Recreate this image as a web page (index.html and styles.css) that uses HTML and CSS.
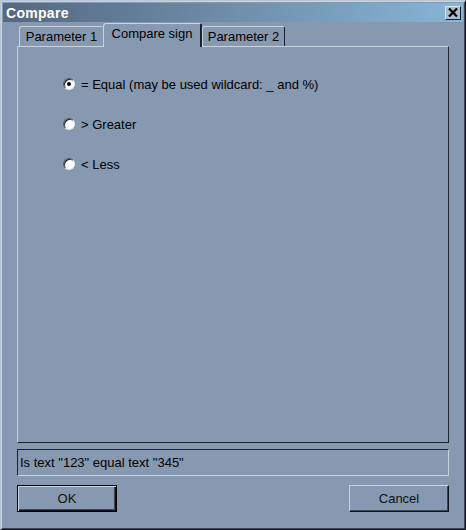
FILE: index.html
```html
<!DOCTYPE html>
<html>
<head>
<meta charset="utf-8">
<link rel="stylesheet" href="styles.css">
</head>
<body>
<div class="window">
  <div class="titlebar">
    <span class="title">Compare</span>
    <span class="close">
      <svg width="10" height="9" viewBox="0 0 10 9"><path d="M1 0.5 L9 8.5 M9 0.5 L1 8.5" stroke="#000" stroke-width="2.2"/></svg>
    </span>
  </div>
  <div class="content">
    <div class="tabs">
      <div class="tab first">Parameter 1</div>
      <div class="tab selected">Compare sign</div>
      <div class="tab last">Parameter 2</div>
    </div>
    <div class="panel">
      <div class="radios">
        <label class="radio-row"><span class="radio checked"></span><span>= Equal (may be used wildcard: _ and %)</span></label>
        <label class="radio-row"><span class="radio"></span><span>&gt; Greater</span></label>
        <label class="radio-row"><span class="radio"></span><span>&lt; Less</span></label>
      </div>
    </div>
    <div class="status">Is text "123" equal text "345"</div>
    <div class="buttons">
      <div class="btn default"><span>OK</span></div>
      <div class="btn">Cancel</div>
    </div>
  </div>
</div>
</body>
</html>
```

FILE: styles.css
```css
html, body {
  margin: 0;
  padding: 0;
  background: #8799b1;
}
body {
  font-family: "Liberation Sans", Arial, sans-serif;
  font-size: 13px;
  color: #000;
}
.window {
  width: 466px;
  height: 530px;
  box-sizing: border-box;
  background: #8799b1;
  border-top: 1px solid #b8c6d6;
  border-left: 1px solid #b8c6d6;
  border-right: 1px solid #10161e;
  border-bottom: 1px solid #10161e;
  box-shadow: inset 1px 1px 0 #c8d4e0, inset -1px -1px 0 #3a4656;
  padding: 2px;
  display: flex;
  flex-direction: column;
}
.titlebar {
  height: 19px;
  background: linear-gradient(to right, #546880, #6c8aa6 45%, #86b6d6);
  display: flex;
  align-items: center;
  justify-content: space-between;
  padding: 0 2px 0 3px;
  flex: none;
}
.title {
  color: #fff;
  font-weight: bold;
  font-size: 14px;
  letter-spacing: 0.3px;
}
.close {
  width: 14px;
  height: 12px;
  background: #a9bccb;
  border-top: 1px solid #d8e2ea;
  border-left: 1px solid #d8e2ea;
  border-right: 1px solid #1a222c;
  border-bottom: 1px solid #1a222c;
  display: flex;
  align-items: center;
  justify-content: center;
}
.close svg { display: block; }
.content {
  flex: 1;
  display: flex;
  flex-direction: column;
  padding: 1px 14px 0 14px;
}
.tabs {
  display: flex;
  align-items: flex-end;
  height: 23px;
  padding-left: 2px;
  position: relative;
  z-index: 1;
}
.tab {
  height: 20px;
  box-sizing: border-box;
  padding-top: 2px;
  border-top: 1px solid #c8d4e0;
  border-left: 1px solid #c8d4e0;
  border-right: 1px solid #1a222c;
  border-top-left-radius: 3px;
  border-top-right-radius: 2px;
  line-height: 16px;
  background: #8799b1;
  white-space: nowrap;
  text-align: center;
}
.tab.first {
  border-right: none;
  width: 84px;
}
.tab.last {
  width: 83px;
}
.tab.selected {
  width: 99px;
  height: 24px;
  margin-bottom: -1px;
  padding-top: 1px;
  line-height: 18px;
  position: relative;
  z-index: 2;
  border-right: 2px solid #1a222c;
}
.panel {
  height: 397px;
  box-sizing: border-box;
  border-top: 1px solid #c8d4e0;
  border-left: 1px solid #c8d4e0;
  border-right: 1px solid #1a222c;
  border-bottom: 1px solid #1a222c;
  padding: 29px 0 0 45px;
}
.radios {
  display: flex;
  flex-direction: column;
  gap: 24px;
}
.radio-row {
  display: flex;
  align-items: center;
  height: 16px;
  gap: 6px;
}
.radio {
  width: 12px;
  height: 12px;
  box-sizing: border-box;
  border-radius: 50%;
  background: #fff;
  border: 1px solid;
  border-color: #4c5664 #dfe6ee #dfe6ee #4c5664;
  box-shadow: inset 1px 1px 0 #1a1e24;
  position: relative;
  flex: none;
}
.radio.checked::after {
  content: "";
  position: absolute;
  left: 3px;
  top: 3px;
  width: 4px;
  height: 4px;
  border-radius: 50%;
  background: #000;
}
.status {
  margin-top: 6px;
  height: 27px;
  box-sizing: border-box;
  border-top: 1px solid #1a222c;
  border-left: 1px solid #1a222c;
  border-right: 1px solid #c8d4e0;
  border-bottom: 1px solid #c8d4e0;
  padding: 0 2px;
  display: flex;
  align-items: center;
  white-space: nowrap;
}
.buttons {
  margin-top: 9px;
  display: flex;
  justify-content: space-between;
}
.btn {
  width: 100px;
  height: 27px;
  box-sizing: border-box;
  border-top: 1px solid #c8d4e0;
  border-left: 1px solid #c8d4e0;
  border-right: 1px solid #10161e;
  border-bottom: 1px solid #10161e;
  box-shadow: inset -1px -1px 0 #3a4656;
  display: flex;
  align-items: center;
  justify-content: center;
  color: #111;
}
.btn.default {
  border: 1px solid #000;
  box-shadow: inset 1px 1px 0 #c8d4e0, inset -1px -1px 0 #10161e, inset -2px -2px 0 #3a4656;
}
```
